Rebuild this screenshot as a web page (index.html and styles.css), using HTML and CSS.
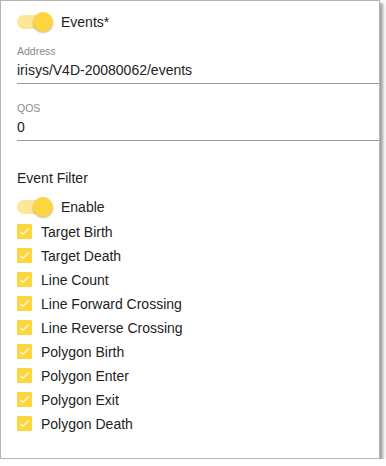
FILE: index.html
```html
<!DOCTYPE html>
<html>
<head>
<meta charset="utf-8">
<link rel="stylesheet" href="styles.css">
</head>
<body>
<div class="panel">
  <div class="toggle-row first">
    <span class="switch"><span class="track"></span><span class="thumb"></span></span>
    <span class="toggle-label">Events*</span>
  </div>
  <div class="field f1">
    <div class="field-label">Address</div>
    <div class="field-input">irisys/V4D-20080062/events</div>
  </div>
  <div class="field f2">
    <div class="field-label">QOS</div>
    <div class="field-input">0</div>
  </div>
  <div class="section-title">Event Filter</div>
  <div class="toggle-row second">
    <span class="switch"><span class="track"></span><span class="thumb"></span></span>
    <span class="toggle-label">Enable</span>
  </div>
  <ul class="checks">
    <li class="check"><span class="box"><svg viewBox="0 0 15 15"><path d="M3.2 7.6 L6 10.3 L11.8 4.6"/></svg></span>Target Birth</li>
    <li class="check"><span class="box"><svg viewBox="0 0 15 15"><path d="M3.2 7.6 L6 10.3 L11.8 4.6"/></svg></span>Target Death</li>
    <li class="check"><span class="box"><svg viewBox="0 0 15 15"><path d="M3.2 7.6 L6 10.3 L11.8 4.6"/></svg></span>Line Count</li>
    <li class="check"><span class="box"><svg viewBox="0 0 15 15"><path d="M3.2 7.6 L6 10.3 L11.8 4.6"/></svg></span>Line Forward Crossing</li>
    <li class="check"><span class="box"><svg viewBox="0 0 15 15"><path d="M3.2 7.6 L6 10.3 L11.8 4.6"/></svg></span>Line Reverse Crossing</li>
    <li class="check"><span class="box"><svg viewBox="0 0 15 15"><path d="M3.2 7.6 L6 10.3 L11.8 4.6"/></svg></span>Polygon Birth</li>
    <li class="check"><span class="box"><svg viewBox="0 0 15 15"><path d="M3.2 7.6 L6 10.3 L11.8 4.6"/></svg></span>Polygon Enter</li>
    <li class="check"><span class="box"><svg viewBox="0 0 15 15"><path d="M3.2 7.6 L6 10.3 L11.8 4.6"/></svg></span>Polygon Exit</li>
    <li class="check"><span class="box"><svg viewBox="0 0 15 15"><path d="M3.2 7.6 L6 10.3 L11.8 4.6"/></svg></span>Polygon Death</li>
  </ul>
</div>
</body>
</html>
```

FILE: styles.css
```css
html, body {
  margin: 0;
  padding: 0;
  background: #ffffff;
}
body {
  font-family: "Liberation Sans", Arial, sans-serif;
  color: #222222;
}
.panel {
  box-sizing: border-box;
  width: 380px;
  height: 459px;
  border: 1px solid #b4b4b4;
  box-shadow: 3px 3px 3px rgba(0, 0, 0, 0.38);
  padding: 11px 0 0 16px;
  background: #fff;
}
.toggle-row {
  display: flex;
  align-items: center;
  height: 20px;
}
.toggle-row.second {
  margin-top: 10px;
}
.switch {
  position: relative;
  width: 36px;
  height: 20px;
  flex: none;
}
.track {
  position: absolute;
  left: 0;
  top: 3px;
  width: 34px;
  height: 14px;
  border-radius: 7px;
  background: #fde698;
}
.thumb {
  position: absolute;
  left: 16px;
  top: 0;
  width: 20px;
  height: 20px;
  border-radius: 50%;
  background: #fdd63f;
  box-shadow: 0 1px 2px rgba(0, 0, 0, 0.28);
}
.toggle-label {
  margin-left: 8px;
  font-size: 14px;
  line-height: 20px;
}
.field {
  border-bottom: 1px solid #9a9a9a;
  padding-bottom: 4px;
}
.field.f1 {
  margin-top: 13px;
}
.field.f2 {
  margin-top: 18px;
}
.field-label {
  font-size: 10.5px;
  line-height: 12px;
  color: #8a8a8a;
}
.field-input {
  margin-top: 4px;
  font-size: 14px;
  line-height: 18px;
  color: #222;
}
.section-title {
  margin-top: 28px;
  font-size: 14px;
  line-height: 18px;
}
.checks {
  list-style: none;
  margin: 3px 0 0 0;
  padding: 0;
}
.check {
  display: flex;
  align-items: center;
  height: 24px;
  font-size: 14px;
  line-height: 24px;
}
.box {
  width: 15px;
  height: 15px;
  margin-right: 9px;
  background: #fdd63f;
  border-radius: 1px;
  flex: none;
  display: flex;
  margin-top: -2px;
}
.box svg {
  width: 15px;
  height: 15px;
}
.box path {
  fill: none;
  stroke: rgba(255, 255, 255, 0.85);
  stroke-width: 1.3;
}
```
